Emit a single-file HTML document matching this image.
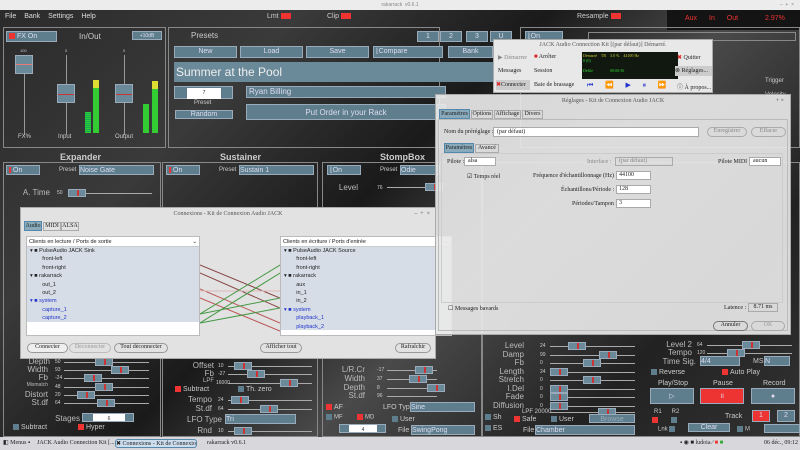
<!DOCTYPE html>
<html><head><meta charset="utf-8">
<style>
*{margin:0;padding:0;box-sizing:border-box}
body{width:800px;height:450px;overflow:hidden;position:relative;background:#1c1c1c;font-family:"Liberation Sans",sans-serif;font-size:7px;color:#ccc}
.a{position:absolute}
.bg{background:linear-gradient(135deg,#2a2a2a 0%,#3a3a3a 25%,#1a1a1a 45%,#4a4a4a 60%,#222 80%,#333 100%)}
.pn{position:absolute;border:1px solid #888}
.btn{position:absolute;background:#5e7e8e;border:1px solid #9ab;color:#dde;text-align:center;font-size:7px;line-height:10px}
.led{display:inline-block;width:6px;height:6px;background:#e33;vertical-align:middle;margin-right:2px}
.ledb{display:inline-block;width:6px;height:6px;background:#5e7e8e;vertical-align:middle;margin-right:2px}
.sl{position:absolute;height:1px;background:#aaa}
.kn{position:absolute;width:18px;height:8px;background:#6a8a9a;border:1px solid #9ab;top:-4px}
.kn:after{content:"";position:absolute;left:8px;top:0;width:2px;height:6px;background:#c33}
.lb{position:absolute;color:#bbb;font-size:8px;text-align:right}
.v{position:absolute;color:#ccc;font-size:5px}
.h{position:absolute;color:#ccc;font-weight:bold;font-size:9px}
.dlg{position:absolute;background:#e4e4e4;border:1px solid #aaa;color:#222;font-family:"Liberation Serif",serif}
.tb{position:absolute;font-size:6px;color:#555;text-align:center;width:100%}
.ser{font-family:"Liberation Serif",serif;font-size:6px;color:#222}
.dlg .ser{font-size:6px!important;white-space:nowrap}
</style></head><body>
<div class="a bg" style="left:0;top:0;width:800px;height:450px"></div>
<div class="a" style="left:0;top:0;width:800px;height:10px;background:#ececec;color:#888;font-size:5px;text-align:center;line-height:10px">rakarrack &nbsp;v0.6.1<span style="position:absolute;right:6px">–&nbsp; +&nbsp; ×</span></div>
<div class="a" style="left:5px;top:13px;color:#ddd;font-size:7px;word-spacing:6px">File Bank Settings Help</div>
<div class="a" style="left:267px;top:13px;color:#ccc;font-size:7px">Lmt<span class="led" style="width:10px;margin-left:2px"></span></div>
<div class="a" style="left:327px;top:13px;color:#ccc;font-size:7px">Clip<span class="led" style="width:10px;margin-left:2px"></span></div>
<div class="a" style="left:577px;top:13px;color:#ccc;font-size:7px">Resample<span class="led" style="width:10px;margin-left:2px"></span></div>
<div class="a" style="left:667px;top:10px;width:133px;height:20px;background:#141414"></div>
<div class="a" style="left:685px;top:15px;color:#e33;font-size:7px;word-spacing:10px">Aux In Out</div>
<div class="a" style="left:765px;top:15px;color:#e33;font-size:7px">2.97%</div>
<div class="pn" style="left:3px;top:27px;width:163px;height:121px"></div>
<div class="btn" style="left:6px;top:31px;width:51px;height:11px;text-align:left"><span class="led" style="margin-left:2px"></span>FX On</div>
<div class="a" style="left:79px;top:32px;font-size:8px;color:#ccc">In/Out</div>
<div class="btn" style="left:132px;top:31px;width:30px;height:9px;font-size:5px;line-height:8px">+10dB</div>
<div class="a" style="left:20px;top:48px;font-size:4px">100</div><div class="a" style="left:65px;top:48px;font-size:4px">0</div><div class="a" style="left:123px;top:48px;font-size:4px">0</div>
<div class="a" style="left:24px;top:60px;width:1px;height:75px;background:#999"></div>
<div class="a" style="left:15px;top:55px;width:18px;height:19px;background:#6a8a9a;border:1px solid #9ab"><div style="margin-top:8px;height:1px;background:#e77"></div></div>
<div class="a" style="left:66px;top:55px;width:1px;height:80px;background:#999"></div>
<div class="a" style="left:57px;top:84px;width:18px;height:19px;background:#6a8a9a;border:1px solid #9ab"><div style="margin-top:9px;height:1px;background:#c33"></div></div>
<div class="a" style="left:124px;top:55px;width:1px;height:80px;background:#999"></div>
<div class="a" style="left:115px;top:84px;width:18px;height:19px;background:#6a8a9a;border:1px solid #9ab"><div style="margin-top:9px;height:1px;background:#c33"></div></div>
<div class="a" style="left:85px;top:112px;width:6px;height:21px;background:repeating-linear-gradient(#3c3 0 1px,#1a5 1px 2px)"></div>
<div class="a" style="left:93px;top:80px;width:6px;height:53px;background:linear-gradient(#dd3 0 8px,#3c3 8px)"></div>
<div class="a" style="left:143px;top:104px;width:6px;height:29px;background:#3c3"></div>
<div class="a" style="left:152px;top:81px;width:6px;height:52px;background:linear-gradient(#dd3 0 8px,#3c3 8px)"></div>
<div class="a" style="left:18px;top:134px;font-size:6px">FX%</div><div class="a" style="left:58px;top:134px;font-size:6px">Input</div><div class="a" style="left:115px;top:134px;font-size:6px">Output</div>
<div class="pn" style="left:168px;top:27px;width:272px;height:121px"></div>
<div class="a" style="left:191px;top:31px;font-size:8px">Presets</div>
<div class="btn" style="left:417px;top:31px;width:22px;height:11px">1</div>
<div class="btn" style="left:440px;top:31px;width:22px;height:11px">2</div>
<div class="btn" style="left:466px;top:31px;width:22px;height:11px">3</div>
<div class="btn" style="left:490px;top:31px;width:22px;height:11px">U</div>
<div class="btn" style="left:174px;top:46px;width:63px;height:12px">New</div>
<div class="btn" style="left:240px;top:46px;width:63px;height:12px">Load</div>
<div class="btn" style="left:306px;top:46px;width:63px;height:12px">Save</div>
<div class="btn" style="left:373px;top:46px;width:70px;height:12px;text-align:left">&nbsp;⌊Compare</div>
<div class="btn" style="left:448px;top:46px;width:45px;height:12px">Bank</div>
<div class="a" style="left:174px;top:62px;width:340px;height:20px;background:#6a8a9a;color:#eee;font-size:12px;line-height:20px;padding-left:2px">Summer at the Pool</div>
<div class="btn" style="left:174px;top:86px;width:59px;height:13px;background:#5e7e8e"><div style="position:absolute;left:12px;top:1px;width:34px;height:11px;background:#fff;color:#333;font-size:5px">7</div></div>
<div class="a" style="left:194px;top:100px;font-size:6px">Preset</div>
<div class="btn" style="left:175px;top:110px;width:58px;height:9px;line-height:8px">Random</div>
<div class="btn" style="left:246px;top:86px;width:200px;height:12px;text-align:left;font-size:8px;padding-left:2px">Ryan Billing</div>
<div class="btn" style="left:246px;top:104px;width:200px;height:16px;font-size:8px;line-height:15px">Put Order in your Rack</div>
<div class="pn" style="left:520px;top:27px;width:280px;height:121px"></div>
<div class="btn" style="left:525px;top:31px;width:38px;height:10px;text-align:left">&nbsp;⌊On</div>
<div class="a" style="left:588px;top:32px;width:208px;height:9px;border:1px solid #888"></div>
<div class="a" style="left:765px;top:78px;font-size:6px">Trigger</div>
<div class="a" style="left:765px;top:92px;font-size:6px">Velocity</div>
<div class="h" style="left:60px;top:152px">Expander</div>
<div class="h" style="left:220px;top:152px">Sustainer</div>
<div class="h" style="left:380px;top:152px">StompBox</div>
<div class="pn" style="left:3px;top:162px;width:158px;height:275px"></div>
<div class="pn" style="left:162px;top:162px;width:156px;height:275px"></div>
<div class="pn" style="left:322px;top:162px;width:160px;height:275px"></div>
<div class="pn" style="left:482px;top:162px;width:318px;height:275px"></div>
<div class="btn" style="left:6px;top:165px;width:34px;height:10px;text-align:left"><span class="led" style="width:2px;margin-left:2px"></span>On</div>
<div class="a" style="left:59px;top:167px;font-size:6px">Preset</div>
<div class="btn" style="left:79px;top:165px;width:75px;height:10px;text-align:left">Noise Gate</div>
<div class="btn" style="left:166px;top:165px;width:34px;height:10px;text-align:left"><span class="led" style="width:2px;margin-left:2px"></span>On</div>
<div class="a" style="left:219px;top:167px;font-size:6px">Preset</div>
<div class="btn" style="left:239px;top:165px;width:75px;height:10px;text-align:left">Sustain 1</div>
<div class="btn" style="left:327px;top:165px;width:34px;height:10px;text-align:left">&nbsp;⌊On</div>
<div class="a" style="left:380px;top:167px;font-size:6px">Preset</div>
<div class="btn" style="left:400px;top:165px;width:40px;height:10px;text-align:left">Odie</div>
<div class="lb" style="left:20px;top:188px;width:30px">A. Time</div><div class="v" style="left:57px;top:190px">50</div>
<div class="sl" style="left:68px;top:193px;width:84px"><div class="kn" style="left:0"></div></div>
<div class="lb" style="left:330px;top:183px;width:28px">Level</div><div class="v" style="left:377px;top:185px">76</div>
<div class="sl" style="left:387px;top:187px;width:50px"><div class="kn" style="left:38px"></div></div>
<div class="lb" style="left:10px;top:357px;width:40px">Depth</div><div class="v" style="left:55px;top:359px">50</div><div class="sl" style="left:64px;top:362px;width:85px"><div class="kn" style="left:31px"></div></div>
<div class="lb" style="left:10px;top:365px;width:38px">Width</div><div class="v" style="left:55px;top:367px">93</div><div class="sl" style="left:64px;top:370px;width:85px"><div class="kn" style="left:47px"></div></div>
<div class="lb" style="left:10px;top:373px;width:38px">Fb</div><div class="v" style="left:55px;top:375px">-24</div><div class="sl" style="left:64px;top:378px;width:85px"><div class="kn" style="left:20px"></div></div>
<div class="lb" style="left:10px;top:382px;width:38px;font-size:5px">Mismatch</div><div class="v" style="left:55px;top:384px">48</div><div class="sl" style="left:64px;top:387px;width:85px"><div class="kn" style="left:31px"></div></div>
<div class="lb" style="left:10px;top:390px;width:38px">Distort</div><div class="v" style="left:55px;top:392px">20</div><div class="sl" style="left:64px;top:395px;width:85px"><div class="kn" style="left:13px"></div></div>
<div class="lb" style="left:10px;top:398px;width:38px">St.df</div><div class="v" style="left:55px;top:400px">64</div><div class="sl" style="left:64px;top:403px;width:85px"><div class="kn" style="left:33px"></div></div>
<div class="lb" style="left:40px;top:414px;width:40px">Stages</div>
<div class="btn" style="left:82px;top:413px;width:52px;height:9px"><div style="position:absolute;left:10px;top:0;width:32px;height:7px;background:#fff;color:#333;font-size:5px">6</div></div>
<div class="a" style="left:13px;top:424px;font-size:7px"><span class="ledb"></span>Subtract</div>
<div class="a" style="left:78px;top:424px;font-size:7px"><span class="led"></span>Hyper</div>
<div class="lb" style="left:170px;top:361px;width:44px">Offset</div><div class="v" style="left:218px;top:363px">10</div><div class="sl" style="left:228px;top:366px;width:84px"><div class="kn" style="left:6px"></div></div>
<div class="lb" style="left:170px;top:369px;width:44px">Fb</div><div class="v" style="left:218px;top:371px">-27</div><div class="sl" style="left:228px;top:374px;width:84px"><div class="kn" style="left:19px"></div></div>
<div class="lb" style="left:170px;top:378px;width:44px;font-size:6px">LPF</div><div class="v" style="left:216px;top:380px">16000</div><div class="sl" style="left:228px;top:383px;width:84px"><div class="kn" style="left:52px"></div></div>
<div class="a" style="left:175px;top:386px;font-size:7px"><span class="led"></span>Subtract</div>
<div class="a" style="left:238px;top:386px;font-size:7px"><span class="ledb"></span>Th. zero</div>
<div class="lb" style="left:170px;top:395px;width:42px">Tempo</div><div class="v" style="left:218px;top:397px">24</div><div class="sl" style="left:228px;top:400px;width:84px"><div class="kn" style="left:3px"></div></div>
<div class="lb" style="left:170px;top:404px;width:42px">St.df</div><div class="v" style="left:218px;top:406px">64</div><div class="sl" style="left:228px;top:409px;width:84px"><div class="kn" style="left:32px"></div></div>
<div class="lb" style="left:170px;top:415px;width:52px">LFO Type</div>
<div class="btn" style="left:225px;top:414px;width:71px;height:10px;text-align:left">Tri</div>
<div class="lb" style="left:170px;top:426px;width:42px">Rnd</div><div class="v" style="left:218px;top:428px">10</div><div class="sl" style="left:228px;top:431px;width:84px"><div class="kn" style="left:6px"></div></div>
<div class="lb" style="left:325px;top:365px;width:40px">L/R.Cr</div><div class="v" style="left:377px;top:367px">-17</div><div class="sl" style="left:387px;top:370px;width:50px"><div class="kn" style="left:28px"></div></div>
<div class="lb" style="left:325px;top:374px;width:40px">Width</div><div class="v" style="left:377px;top:376px">37</div><div class="sl" style="left:387px;top:379px;width:50px"><div class="kn" style="left:22px"></div></div>
<div class="lb" style="left:325px;top:383px;width:40px">Depth</div><div class="v" style="left:377px;top:385px">8</div><div class="sl" style="left:387px;top:388px;width:50px"><div class="kn" style="left:40px"></div></div>
<div class="lb" style="left:325px;top:391px;width:40px">St.df</div><div class="v" style="left:377px;top:393px">96</div><div class="sl" style="left:387px;top:396px;width:50px"></div>
<div class="a" style="left:326px;top:404px;font-size:7px"><span class="led"></span>AF</div>
<div class="a" style="left:383px;top:404px;font-size:7px">LFO Type</div>
<div class="btn" style="left:410px;top:402px;width:65px;height:10px;text-align:left">Sine</div>
<div class="a" style="left:326px;top:414px;font-size:6px"><span class="ledb"></span>MF</div>
<div class="a" style="left:357px;top:414px;font-size:6px"><span class="led"></span>MD</div>
<div class="a" style="left:392px;top:416px;font-size:7px"><span class="ledb"></span>User</div>
<div class="btn" style="left:339px;top:424px;width:47px;height:9px"><div style="position:absolute;left:9px;top:0;width:28px;height:7px;background:#fff;color:#333;font-size:5px">4</div></div>
<div class="a" style="left:398px;top:427px;font-size:7px">File</div>
<div class="btn" style="left:411px;top:425px;width:64px;height:10px;text-align:left">SwingPong</div>
<div class="lb" style="left:480px;top:341px;width:44px">Level</div><div class="v" style="left:540px;top:343px">24</div><div class="sl" style="left:550px;top:346px;width:85px"><div class="kn" style="left:18px"></div></div>
<div class="lb" style="left:480px;top:350px;width:44px">Damp</div><div class="v" style="left:540px;top:352px">99</div><div class="sl" style="left:550px;top:355px;width:85px"><div class="kn" style="left:49px"></div></div>
<div class="lb" style="left:480px;top:358px;width:44px">Fb</div><div class="v" style="left:540px;top:360px">0</div><div class="sl" style="left:550px;top:363px;width:85px"><div class="kn" style="left:33px"></div></div>
<div class="lb" style="left:480px;top:367px;width:44px">Length</div><div class="v" style="left:540px;top:369px">24</div><div class="sl" style="left:550px;top:372px;width:85px"><div class="kn" style="left:0"></div></div>
<div class="lb" style="left:480px;top:375px;width:44px">Stretch</div><div class="v" style="left:540px;top:377px">0</div><div class="sl" style="left:550px;top:380px;width:85px"><div class="kn" style="left:33px"></div></div>
<div class="lb" style="left:480px;top:384px;width:44px">I.Del</div><div class="v" style="left:540px;top:386px">0</div><div class="sl" style="left:550px;top:389px;width:85px"><div class="kn" style="left:0"></div></div>
<div class="lb" style="left:480px;top:392px;width:44px">Fade</div><div class="v" style="left:540px;top:394px">0</div><div class="sl" style="left:550px;top:397px;width:85px"><div class="kn" style="left:0"></div></div>
<div class="lb" style="left:480px;top:401px;width:44px">Diffusion</div><div class="v" style="left:540px;top:403px">0</div><div class="sl" style="left:550px;top:406px;width:85px"><div class="kn" style="left:0"></div></div>
<div class="a" style="left:522px;top:409px;font-size:6px">LPF 20000</div><div class="sl" style="left:550px;top:412px;width:85px"><div class="kn" style="left:48px"></div></div>
<div class="a" style="left:485px;top:414px;font-size:7px"><span class="ledb"></span>Sh</div>
<div class="a" style="left:514px;top:416px;font-size:7px"><span class="led"></span>Safe</div>
<div class="a" style="left:551px;top:416px;font-size:7px"><span class="ledb"></span>User</div>
<div class="btn" style="left:589px;top:414px;width:46px;height:9px;color:#9ab">Browse</div>
<div class="a" style="left:485px;top:425px;font-size:7px"><span class="ledb"></span>ES</div>
<div class="a" style="left:523px;top:427px;font-size:7px">File</div>
<div class="btn" style="left:535px;top:425px;width:100px;height:10px;text-align:left">Chamber</div>
<div class="lb" style="left:640px;top:340px;width:52px">Level 2</div><div class="v" style="left:697px;top:342px">64</div><div class="sl" style="left:707px;top:345px;width:85px"><div class="kn" style="left:35px"></div></div>
<div class="lb" style="left:640px;top:348px;width:52px">Tempo</div><div class="v" style="left:697px;top:350px">120</div><div class="sl" style="left:707px;top:353px;width:85px"><div class="kn" style="left:20px"></div></div>
<div class="lb" style="left:640px;top:357px;width:56px">Time Sig.</div>
<div class="btn" style="left:700px;top:356px;width:40px;height:10px;text-align:left">4/4</div>
<div class="a" style="left:753px;top:358px;font-size:7px">MS</div>
<div class="btn" style="left:764px;top:356px;width:26px;height:10px;text-align:left">N</div>
<div class="a" style="left:651px;top:369px;font-size:7px"><span class="ledb"></span>Reverse</div>
<div class="a" style="left:722px;top:369px;font-size:7px"><span class="led"></span>Auto Play</div>
<div class="a" style="left:658px;top:380px;font-size:7px">Play/Stop</div><div class="a" style="left:713px;top:380px;font-size:7px">Pause</div><div class="a" style="left:763px;top:380px;font-size:7px">Record</div>
<div class="btn" style="left:650px;top:388px;width:44px;height:16px;line-height:15px">▷</div>
<div class="btn" style="left:700px;top:388px;width:44px;height:16px;line-height:15px;background:#e33">॥</div>
<div class="btn" style="left:751px;top:388px;width:44px;height:16px;line-height:15px">●</div>
<div class="a" style="left:654px;top:409px;font-size:6px">R1 &nbsp;&nbsp;&nbsp;&nbsp; R2</div>
<div class="a" style="left:652px;top:417px"><span class="led"></span></div><div class="a" style="left:671px;top:417px"><span class="ledb"></span></div>
<div class="a" style="left:725px;top:413px;font-size:7px">Track</div>
<div class="btn" style="left:752px;top:410px;width:18px;height:12px;background:#e33">1</div>
<div class="btn" style="left:777px;top:410px;width:18px;height:12px">2</div>
<div class="a" style="left:658px;top:426px;font-size:6px">Lnk <span class="ledb"></span></div>
<div class="btn" style="left:688px;top:423px;width:42px;height:9px;line-height:8px">Clear</div>
<div class="a" style="left:737px;top:426px;font-size:6px"><span class="ledb"></span>M</div>
<div class="btn" style="left:764px;top:424px;width:36px;height:9px"></div>
<!-- Connexions dialog -->
<div class="dlg" style="left:20px;top:207px;width:416px;height:152px;background:#e2e2e2">
 <div class="tb" style="top:3px">Connexions - Kit de Connexion Audio JACK<span style="position:absolute;right:5px">–&nbsp; +&nbsp; ×</span></div>
 <div class="a ser" style="left:3px;top:13px;width:18px;height:10px;background:#8ab;border:1px solid #58a;text-align:center;line-height:9px">Audio</div>
 <div class="a ser" style="left:22px;top:14px;width:18px;height:9px;border:1px solid #aaa;text-align:center">MIDI</div>
 <div class="a ser" style="left:40px;top:14px;width:18px;height:9px;border:1px solid #aaa;text-align:center">ALSA</div>
 <div class="a" style="left:5px;top:28px;width:174px;height:100px;background:#fff;border:1px solid #bbb">
  <div style="height:10px;border-bottom:1px solid #ccc;font-size:5.5px;padding:2px;font-family:'Liberation Sans'">Clients en lecture / Ports de sortie<span style="float:right">⌄</span></div>
  <div style="background:#d6dde6;height:75px;font-family:'Liberation Sans';font-size:5.5px;line-height:8.4px;padding-left:3px">
   ▾ ■ PulseAudio JACK Sink<br>&nbsp;&nbsp;&nbsp;&nbsp;&nbsp;&nbsp;&nbsp;&nbsp;front-left<br>&nbsp;&nbsp;&nbsp;&nbsp;&nbsp;&nbsp;&nbsp;&nbsp;front-right<br>▾ ■ rakarrack<br>&nbsp;&nbsp;&nbsp;&nbsp;&nbsp;&nbsp;&nbsp;&nbsp;out_1<br>&nbsp;&nbsp;&nbsp;&nbsp;&nbsp;&nbsp;&nbsp;&nbsp;out_2<br><span style="color:#23c">▾ ■ system<br>&nbsp;&nbsp;&nbsp;&nbsp;&nbsp;&nbsp;&nbsp;&nbsp;capture_1<br>&nbsp;&nbsp;&nbsp;&nbsp;&nbsp;&nbsp;&nbsp;&nbsp;capture_2</span>
  </div></div>
 <svg class="a" style="left:179px;top:50px" width="80" height="80"><g stroke-width="1"><line x1="0" y1="7" x2="80" y2="40" stroke="#844"/><line x1="0" y1="15" x2="80" y2="50" stroke="#844"/><line x1="0" y1="31" x2="80" y2="65" stroke="#b55"/><line x1="0" y1="40" x2="80" y2="73" stroke="#b55"/><line x1="0" y1="33" x2="80" y2="33" stroke="#dbb"/><line x1="0" y1="56" x2="80" y2="7" stroke="#494"/><line x1="0" y1="65" x2="80" y2="15" stroke="#494"/><line x1="0" y1="56" x2="80" y2="40" stroke="#494"/><line x1="0" y1="65" x2="80" y2="50" stroke="#494"/></g></svg>
 <div class="a" style="left:259px;top:28px;width:172px;height:100px;background:#fff;border:1px solid #bbb">
  <div style="height:10px;border-bottom:1px solid #ccc;font-size:5.5px;padding:2px;font-family:'Liberation Sans'">Clients en écriture / Ports d'entrée<span style="float:right">⌄</span></div>
  <div style="background:#d6dde6;height:83px;font-family:'Liberation Sans';font-size:5.5px;line-height:8.4px;padding-left:3px">
   ▾ ■ PulseAudio JACK Source<br>&nbsp;&nbsp;&nbsp;&nbsp;&nbsp;&nbsp;&nbsp;&nbsp;front-left<br>&nbsp;&nbsp;&nbsp;&nbsp;&nbsp;&nbsp;&nbsp;&nbsp;front-right<br>▾ ■ rakarrack<br>&nbsp;&nbsp;&nbsp;&nbsp;&nbsp;&nbsp;&nbsp;&nbsp;aux<br>&nbsp;&nbsp;&nbsp;&nbsp;&nbsp;&nbsp;&nbsp;&nbsp;in_1<br>&nbsp;&nbsp;&nbsp;&nbsp;&nbsp;&nbsp;&nbsp;&nbsp;in_2<br><span style="color:#23c">▾ ■ system<br>&nbsp;&nbsp;&nbsp;&nbsp;&nbsp;&nbsp;&nbsp;&nbsp;playback_1<br>&nbsp;&nbsp;&nbsp;&nbsp;&nbsp;&nbsp;&nbsp;&nbsp;playback_2</span>
  </div></div>
 <div class="a ser" style="left:6px;top:135px;width:41px;height:10px;border:1px solid #999;border-radius:5px;text-align:center;background:#eee">Connecter</div>
 <div class="a ser" style="left:48px;top:135px;width:42px;height:10px;border:1px solid #bbb;border-radius:5px;text-align:center;color:#999">Déconnecter</div>
 <div class="a ser" style="left:93px;top:135px;width:54px;height:10px;border:1px solid #999;border-radius:5px;text-align:center">Tout déconnecter</div>
 <div class="a ser" style="left:239px;top:135px;width:42px;height:10px;border:1px solid #999;border-radius:5px;text-align:center">Afficher tout</div>
 <div class="a ser" style="left:374px;top:135px;width:36px;height:10px;border:1px solid #999;border-radius:5px;text-align:center">Rafraîchir</div>
</div>
<!-- JACK main -->
<div class="dlg" style="left:493px;top:39px;width:220px;height:54px;background:#e8e8e8">
 <div class="tb" style="top:2px">JACK Audio Connection Kit [(par défaut)] Démarré.</div>
 <div class="a ser" style="left:4px;top:14px;color:#888">▶ Démarrer</div>
 <div class="a ser" style="left:40px;top:14px"><span style="color:#d22">■</span> Arrêter</div>
 <div class="a ser" style="left:4px;top:28px">Messages</div>
 <div class="a ser" style="left:40px;top:28px">Session</div>
 <div class="a ser" style="left:2px;top:40px;width:34px;height:10px;background:#ccc;line-height:10px"><span style="color:#d22">✖</span>Connecter</div>
 <div class="a ser" style="left:40px;top:42px">Baie de brassage</div>
 <div class="a" style="left:88px;top:12px;width:96px;height:27px;background:#101810;font-size:4px;color:#3d3;padding:1px"><span style="color:#cc3">Démarré &nbsp;&nbsp; TR &nbsp;&nbsp; 3.0 % &nbsp;&nbsp; 44100 Hz</span><br>0 (0)<br><br>Défile &nbsp;&nbsp;&nbsp;&nbsp;&nbsp;&nbsp;&nbsp;&nbsp;&nbsp;&nbsp;&nbsp;&nbsp;&nbsp;&nbsp;&nbsp; 00:00:56</div>
 <div class="a" style="left:93px;top:41px;color:#23c;font-size:7px;word-spacing:10px">⏮ ⏪ ▶ ⏸ ⏩</div>
 <div class="a ser" style="left:183px;top:14px"><span style="color:#d22">✖</span> Quitter</div>
 <div class="a ser" style="left:181px;top:26px;width:37px;height:10px;background:#ccc;line-height:10px">⊗ Réglages...</div>
 <div class="a ser" style="left:183px;top:42px">ⓘ À propos...</div>
</div>
<!-- Réglages -->
<div class="dlg" style="left:435px;top:94px;width:356px;height:241px;background:rgba(232,232,232,0.92)">
 <div class="tb" style="top:3px">Réglages - Kit de Connexion Audio JACK<span style="position:absolute;right:6px">+ ×</span></div>
 <div class="a ser" style="left:3px;top:14px;width:31px;height:10px;background:#8ab;border:1px solid #58a;text-align:center;line-height:9px">Paramètres</div>
 <div class="a ser" style="left:35px;top:15px;width:22px;height:9px;border:1px solid #aaa;text-align:center">Options</div>
 <div class="a ser" style="left:58px;top:15px;width:27px;height:9px;border:1px solid #aaa;text-align:center">Affichage</div>
 <div class="a ser" style="left:86px;top:15px;width:21px;height:9px;border:1px solid #aaa;text-align:center">Divers</div>
 <div class="a" style="left:2px;top:24px;width:350px;height:212px;border:1px solid #bbb"></div>
 <div class="a ser" style="left:8px;top:34px">Nom du préréglage :</div>
 <div class="a ser" style="left:57px;top:32px;width:206px;height:10px;background:#fff;border:1px solid #aaa;line-height:9px;padding-left:3px">(par défaut)</div>
 <div class="a ser" style="left:271px;top:32px;width:40px;height:10px;border:1px solid #aaa;border-radius:5px;color:#888;text-align:center">Enregistrer</div>
 <div class="a ser" style="left:315px;top:32px;width:35px;height:10px;border:1px solid #aaa;border-radius:5px;color:#888;text-align:center">Effacer</div>
 <div class="a ser" style="left:8px;top:48px;width:30px;height:10px;background:#8ab;border:1px solid #58a;text-align:center;line-height:9px">Paramètres</div>
 <div class="a ser" style="left:39px;top:49px;width:24px;height:9px;border:1px solid #aaa;text-align:center">Avancé</div>
 <div class="a" style="left:5px;top:58px;width:342px;height:150px;border:1px solid #ccc"></div>
 <div class="a ser" style="left:11px;top:64px">Pilote :</div>
 <div class="a ser" style="left:28px;top:62px;width:32px;height:9px;background:#fff;border:1px solid #aaa;padding-left:3px">alsa</div>
 <div class="a ser" style="left:151px;top:64px;color:#888">Interface :</div>
 <div class="a ser" style="left:179px;top:62px;width:58px;height:9px;border:1px solid #aaa;color:#888;padding-left:3px">(par défaut)</div>
 <div class="a ser" style="left:282px;top:64px">Pilote MIDI :</div>
 <div class="a ser" style="left:313px;top:62px;width:32px;height:9px;background:#fff;border:1px solid #aaa;padding-left:3px">aucun</div>
 <div class="a ser" style="left:31px;top:78px">☑ Temps réel</div>
 <div class="a ser" style="left:97px;top:78px">Fréquence d'échantillonnage (Hz) :</div>
 <div class="a ser" style="left:180px;top:76px;width:35px;height:9px;background:#fff;border:1px solid #aaa;padding-left:2px">44100</div>
 <div class="a ser" style="left:125px;top:92px">Échantillons/Période :</div>
 <div class="a ser" style="left:180px;top:90px;width:35px;height:9px;background:#fff;border:1px solid #aaa;padding-left:2px">128</div>
 <div class="a ser" style="left:136px;top:106px">Périodes/Tampon :</div>
 <div class="a ser" style="left:180px;top:104px;width:35px;height:9px;background:#fff;border:1px solid #aaa;padding-left:2px">3</div>
 <div class="a ser" style="left:12px;top:210px">☐ Messages bavards</div>
 <div class="a ser" style="left:288px;top:210px">Latence :</div>
 <div class="a ser" style="left:312px;top:208px;width:30px;height:9px;border:1px solid #aaa;text-align:center">8.71 ms</div>
 <div class="a ser" style="left:277px;top:226px;width:35px;height:10px;border:1px solid #777;border-radius:5px;text-align:center">Annuler</div>
 <div class="a ser" style="left:315px;top:226px;width:34px;height:10px;border:1px solid #aaa;border-radius:5px;text-align:center;color:#999">OK</div>
</div>
<div class="a" style="left:0;top:437px;width:800px;height:13px;background:#d8d8dc;font-family:'Liberation Serif',serif;font-size:6px;color:#222;line-height:13px;white-space:nowrap">
 <span style="position:absolute;left:3px">◧ Menus ▪</span>
 <span style="position:absolute;left:37px">JACK Audio Connection Kit [...</span>
 <span style="position:absolute;left:115px;top:2px;width:82px;height:9px;line-height:9px;border:1px solid #58a;border-radius:3px;background:#cde;overflow:hidden">✖ Connexions - Kit de Connexio</span>
 <span style="position:absolute;left:207px">rakarrack v0.6.1</span>
 <span style="position:absolute;left:680px">▪ ◉ ■ ludoia ⁄ <span style="color:#e33">■</span> <span style="color:#3a3">■</span></span>
 <span style="position:absolute;left:764px">06 déc., 09:12</span>
</div>
</body></html>
